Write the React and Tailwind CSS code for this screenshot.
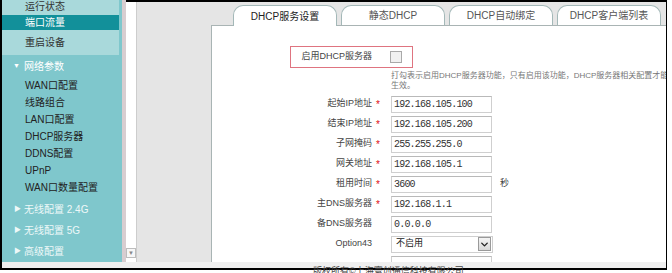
import React from 'react'
import { ChevronDown } from 'lucide-react'

const font = "font-['Liberation_Sans','Noto_Sans_CJK_SC',sans-serif]"

const subItems = ['WAN口配置', '线路组合', 'LAN口配置', 'DHCP服务器', 'DDNS配置', 'UPnP', 'WAN口数量配置']
const sections = ['无线配置 2.4G', '无线配置 5G', '高级配置']

const tabs = [
  { label: 'DHCP服务设置', active: true },
  { label: '静态DHCP' },
  { label: 'DHCP自动绑定' },
  { label: 'DHCP客户端列表' }
]

const rows = [
  { label: '起始IP地址', value: '192.168.105.100', required: true },
  { label: '结束IP地址', value: '192.168.105.200', required: true },
  { label: '子网掩码', value: '255.255.255.0', required: true },
  { label: '网关地址', value: '192.168.105.1', required: true },
  { label: '租用时间', value: '3600', required: true, unit: '秒' },
  { label: '主DNS服务器', value: '192.168.1.1', required: true },
  { label: '备DNS服务器', value: '0.0.0.0' }
]

const Sidebar = () => (
  <div className="w-[120px] bg-[#7fc7cc] flex flex-col text-[10px] overflow-hidden">
    {/* top group, scrolled a little */}
    <div className="mr-[3px] bg-[#a9d9db] -mt-[2px]">
      <div className="h-[17px] pl-[23px] flex items-center text-[#333]">运行状态</div>
      <div className="h-[15px] pl-[23px] flex items-center bg-[#12909a] text-white">端口流量</div>
      <div className="h-[25px] pl-[23px] flex items-center text-[#333]">重启设备</div>
    </div>

    <div className="h-[22px] flex items-center text-white">
      <span className="w-[22px] pl-[11px] text-[7px]">▼</span>
      <span>网络参数</span>
    </div>
    <div className="pb-[3px]">
      {subItems.map((item) => (
        <div key={item} className="h-[17px] pl-[23px] flex items-center text-[#222]">
          {item}
        </div>
      ))}
    </div>

    {sections.map((s) => (
      <div key={s} className="h-[21px] flex items-center text-[#eef8f8]">
        <span className="w-[22px] pl-[12px] text-[7px]">▶</span>
        <span>{s}</span>
      </div>
    ))}
  </div>
)

const Tabs = () => (
  <div className="flex items-start gap-[4px] pl-[96px] h-[21px] -mb-px relative z-10">
    {tabs.map((t) => (
      <div
        key={t.label}
        className={`w-[104px] rounded-t-[10px] border border-b-0 border-[#a3b8b8] bg-white flex items-center justify-center text-[10px] ${
          t.active ? 'h-[21px] text-[#222]' : 'h-[20px] text-[#555]'
        }`}
      >
        {t.label}
      </div>
    ))}
  </div>
)

const Field = ({ children }) => (
  <div className="w-[101px] h-[17px] border border-[#cfcfcf] border-t-[#b9b9b9] bg-white flex items-center pl-[2px] font-['Liberation_Mono',monospace] text-[10px] tracking-[-0.8px] text-[#333]">
    {children}
  </div>
)

const Form = () => (
  <div className="flex flex-col text-[9px] text-[#444]">
    <div className="mt-[20px] ml-[78px] w-[123px] h-[22px] border border-[#df7480] flex items-center">
      <div className="w-[81px] text-right">启用DHCP服务器</div>
      <div className="ml-[18px] w-[12px] h-[12px] border border-[#a9a9a9] bg-[#f1f1f1]" />
    </div>

    <div className="mt-[3px] ml-[179px] w-[278px] text-[8px] leading-[10px] text-[#777]">
      打勾表示启用DHCP服务器功能，只有启用该功能，DHCP服务器相关配置才能生效。
    </div>

    <div className="mt-[3px] flex flex-col">
      {rows.map((r) => (
        <div key={r.label} className="h-[20px] flex items-center">
          <div className="w-[160px] text-right">{r.label}</div>
          <div className="w-[19px] pl-[4px] text-[#e01010] text-[10px]">{r.required ? '*' : ''}</div>
          <Field>{r.value}</Field>
          {r.unit && <span className="ml-[8px] text-[#444]">{r.unit}</span>}
        </div>
      ))}
      <div className="h-[20px] flex items-center">
        <div className="w-[160px] text-right">Option43</div>
        <div className="w-[19px]" />
        <div className="w-[102px] h-[17px] border border-[#cfcfcf] bg-white flex items-center justify-between">
          <span className="pl-[4px] text-[#222]">不启用</span>
          <span className="w-[13px] h-[14px] mr-px border border-[#9a9a9a] bg-gradient-to-b from-[#f4f4f4] to-[#d8d8d8] flex items-center justify-center">
            <ChevronDown size={11} strokeWidth={3} className="text-[#222]" />
          </span>
        </div>
      </div>
      <div className="h-[20px] flex items-center">
        <div className="w-[179px]" />
        <Field>&nbsp;</Field>
      </div>
    </div>
  </div>
)

export default function App() {
  return (
    <div className={`w-[672px] h-[273px] bg-white overflow-hidden relative ${font}`}>
      <div className="w-[667px] h-[270px] border-l-2 border-r border-b-2 border-black flex flex-col">
        <div className="h-[262px] flex">
          <Sidebar />
          <div className="w-[4px] bg-[#d8cdd0]" />
          <div className="flex-1 flex border-t-2 border-black min-w-0">
            {/* scrollbar */}
            <div className="w-[11px] bg-white border-r border-[#cdcdcd] flex flex-col justify-end pb-[4px]">
              <div className="w-[10px] h-[10px] border border-[#bdbdbd] bg-[#f7f7f7] flex items-center justify-center text-[6px] text-[#888]">
                ▼
              </div>
            </div>
            {/* main panel */}
            <div className="flex-1 bg-[#e5e5e5] pt-[3px] flex flex-col min-w-0 overflow-hidden">
              <Tabs />
              <div className="ml-[74px] flex-1 bg-white border-l border-t border-[#a9b4b4] overflow-hidden">
                <Form />
              </div>
            </div>
          </div>
        </div>
        <div className="flex-1 bg-[#efefef]" />
      </div>
      <div className="absolute left-[313px] top-[265px] text-[9px] text-[#444] whitespace-nowrap">
        版权所有©上海寰创通信科技有限公司
      </div>
    </div>
  )
}
